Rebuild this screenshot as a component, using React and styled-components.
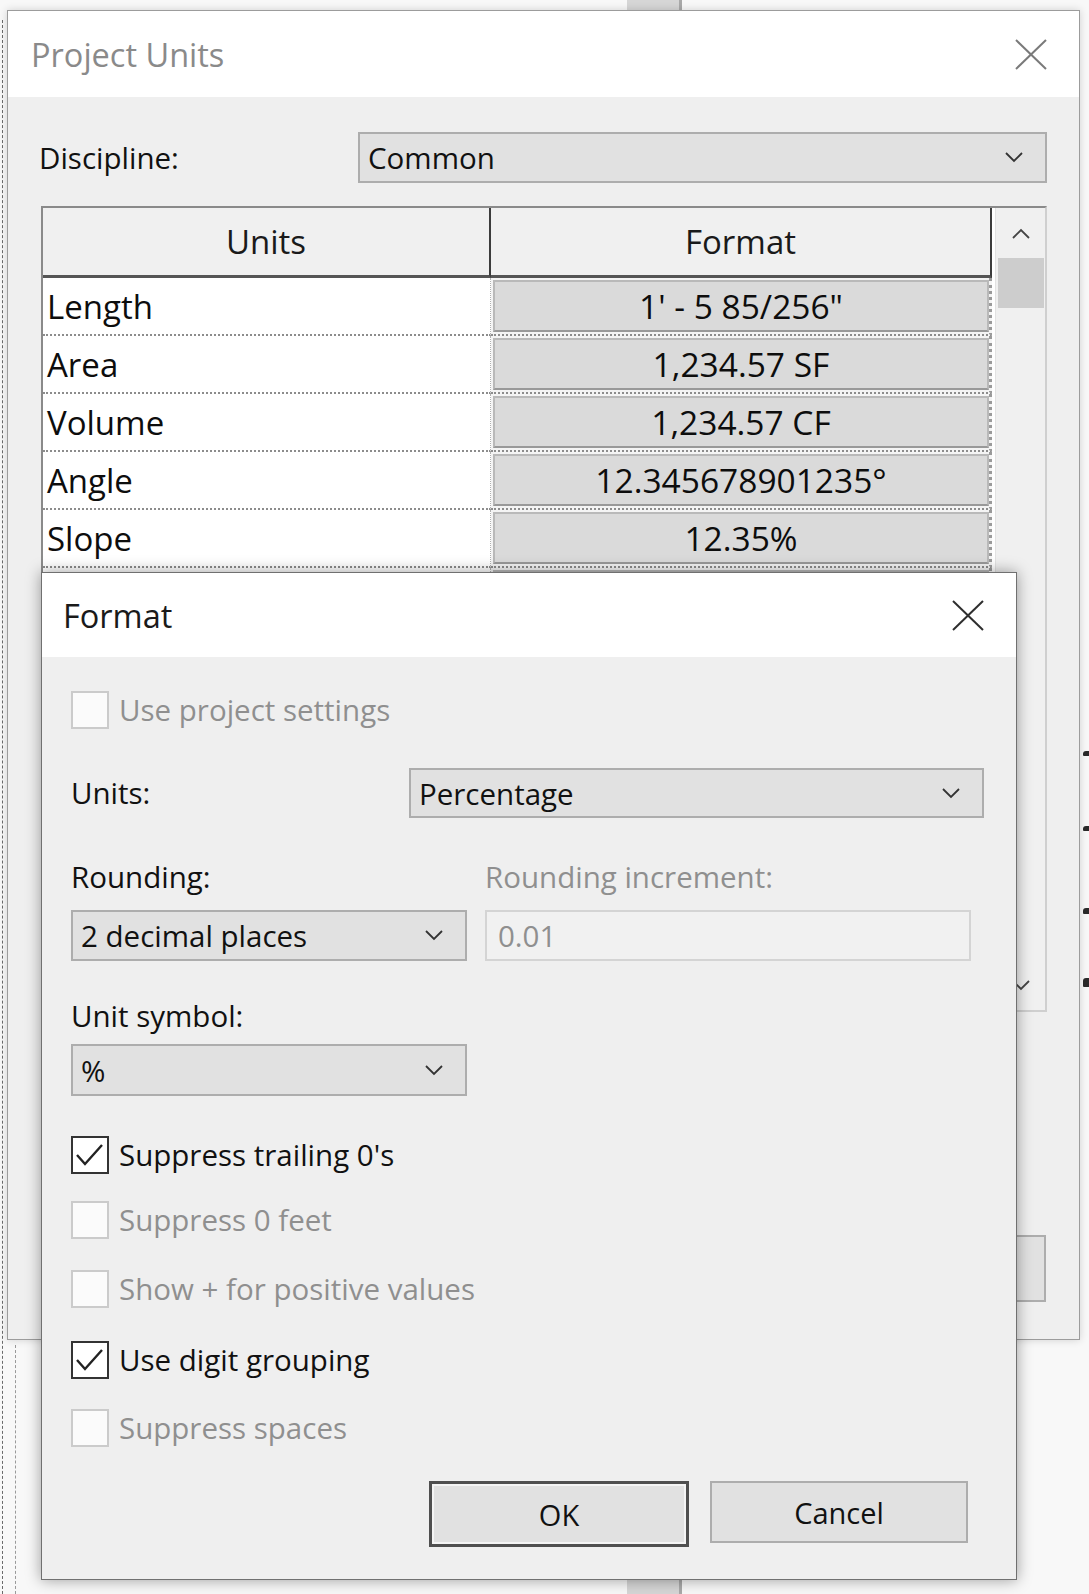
import React from 'react';
import styled, { createGlobalStyle } from 'styled-components';

const GlobalStyle = createGlobalStyle`
  html, body {
    margin: 0;
    padding: 0;
    background: #f7f7f7;
  }
  body {
    font-family: "Open Sans", "Noto Sans", sans-serif;
    color: #111111;
  }
`;

// DESKTOP / BACKGROUND DRAWING
const Desktop = styled.div`
  position: relative;
  width: 1089px;
  height: 1594px;
  overflow: hidden;
  background: #f8f8f8;
`;

const GrayStrip = styled.div`
  position: absolute;
  left: 627px;
  top: 0;
  bottom: 0;
  width: 52px;
  background: #d6d6d6;
  border-right: 3px solid #a9a9a9;
`;

const DashedLine = styled.div`
  position: absolute;
  left: ${p => p.x}px;
  top: ${p => p.top}px;
  bottom: 0;
  border-left: 1px dashed ${p => p.color || '#6a6a6a'};
`;

const Mark = styled.div`
  position: absolute;
  left: 1083px;
  top: ${p => p.y}px;
  width: 7px;
  height: ${p => p.h || 5}px;
  background: #2a2a2a;
  border-radius: 3px 0 0 1px;
`;

// WINDOWS
const Window = styled.div`
  position: absolute;
  left: ${p => p.left}px;
  top: ${p => p.top}px;
  width: ${p => p.w}px;
  height: ${p => p.h}px;
  box-sizing: border-box;
  display: flex;
  flex-direction: column;
  background: #efefef;
  border: 1px solid ${p => (p.active ? '#707070' : '#9c9c9c')};
  box-shadow: ${p => (p.active ? '0 0 14px rgba(0, 0, 0, 0.38)' : '0 0 8px rgba(0, 0, 0, 0.16)')};
`;

const TitleBar = styled.div`
  flex: 0 0 ${p => p.h}px;
  display: flex;
  align-items: center;
  justify-content: space-between;
  padding: 0 ${p => p.padR}px 0 ${p => p.padL}px;
  background: #ffffff;
`;

const Title = styled.span`
  font-size: 32.5px;
  color: ${p => (p.active ? '#1a1a1a' : '#8a8a8a')};
`;

const Body = styled.div`
  flex: 1;
  display: flex;
  flex-direction: column;
  padding: ${p => p.pad};
`;

const Label = styled.div`
  font-size: 29.5px;
  line-height: 36px;
  color: ${p => (p.disabled ? '#8f8f8f' : '#111111')};
`;

const FieldRow = styled.div`
  display: grid;
  grid-template-columns: ${p => p.labelW}px 1fr;
  align-items: center;
  margin-top: ${p => p.mt || 0}px;
`;

const Combo = styled.div`
  height: ${p => p.h || 51}px;
  box-sizing: border-box;
  display: flex;
  align-items: center;
  justify-content: space-between;
  padding: 0 22px 0 8px;
  background: #e1e1e1;
  border: 2px solid #adadad;
  font-size: 29.5px;
  color: #111111;
`;

const TextInput = styled.div`
  height: 51px;
  box-sizing: border-box;
  display: flex;
  align-items: center;
  padding: 0 11px;
  background: #f1f1f1;
  border: 2px solid #d4d4d4;
  font-size: 29.5px;
  color: #8f8f8f;
`;

// PROJECT UNITS TABLE
const Table = styled.div`
  margin: 23px 0 0 2px;
  height: 806px;
  box-sizing: border-box;
  display: flex;
  border: 2px solid #8a8a8a;
  border-bottom-color: #cfcfcf;
  border-right-color: #cfcfcf;
  background: #ffffff;
`;

const Grid = styled.div`
  display: grid;
  grid-template-columns: 448px 501px;
  grid-auto-rows: 58px;
  grid-template-rows: 70px;
  align-content: start;
`;

const HeadCell = styled.div`
  box-sizing: border-box;
  display: flex;
  align-items: center;
  justify-content: center;
  background: #f0f0f0;
  border-right: 2px solid #3c3c3c;
  border-bottom: 3px solid #555555;
  font-size: 33px;
  color: #1a1a1a;
`;

const NameCell = styled.div`
  box-sizing: border-box;
  display: flex;
  align-items: center;
  padding-left: 4px;
  background: #ffffff;
  border-bottom: 2px dotted #8c8c8c;
  border-right: 1px dotted #b0b0b0;
  font-size: 33px;
  color: #0d0d0d;
`;

const FormatCell = styled.div`
  box-sizing: border-box;
  display: flex;
  padding: 2px 0 2px 2px;
  background: #f4f4f4;
  border-bottom: 2px dotted #8c8c8c;
  border-right: 3px dotted #9a9a9a;
`;

const FormatBox = styled.div`
  flex: 1;
  display: flex;
  align-items: center;
  justify-content: center;
  background: #dadada;
  border: 2px solid #b9b9b9;
  border-bottom-color: #999999;
  font-size: 33.5px;
  color: #0d0d0d;
`;

const Scrollbar = styled.div`
  margin-left: 3px;
  width: 50px;
  display: flex;
  flex-direction: column;
  align-items: center;
  background: #f0f0f0;
  border-left: 1px solid #e2e2e2;
`;

const ScrollArrow = styled.div`
  height: 50px;
  display: flex;
  align-items: center;
  justify-content: center;
  margin-top: ${p => (p.down ? 'auto' : '0')};
`;

const Thumb = styled.div`
  width: 46px;
  height: 50px;
  background: #cdcdcd;
`;

const Footer = styled.div`
  margin-top: auto;
  display: flex;
  justify-content: flex-end;
  gap: 20px;
  padding-bottom: 37px;
  margin-right: 1px;
`;

// FORMAT DIALOG PARTS
const CheckRow = styled.div`
  display: flex;
  align-items: center;
  gap: 10px;
  margin-top: ${p => p.mt}px;
  height: 38px;
`;

const Box = styled.div`
  width: 38px;
  height: 38px;
  box-sizing: border-box;
  display: flex;
  align-items: center;
  justify-content: center;
  background: ${p => (p.disabled ? '#fbfbfb' : '#ffffff')};
  border: 2px solid ${p => (p.disabled ? '#cbcbcb' : '#333333')};
`;

const TwoCol = styled.div`
  display: grid;
  grid-template-columns: 396px 486px;
  column-gap: 18px;
  row-gap: 15px;
  margin-top: 41px;
`;

const Stack = styled.div`
  display: flex;
  flex-direction: column;
  gap: 10px;
  width: 396px;
  margin-top: 37px;
`;

const ButtonRow = styled.div`
  display: flex;
  justify-content: flex-end;
  gap: 21px;
  margin-top: 34px;
  margin-right: 16px;
`;

const Button = styled.div`
  width: ${p => p.w}px;
  height: ${p => p.h || 66}px;
  box-sizing: border-box;
  display: flex;
  align-items: center;
  justify-content: center;
  background: #e1e1e1;
  border: ${p => (p.primary ? '3px solid #4f4f4f' : '2px solid #adadad')};
  box-shadow: ${p => (p.primary ? 'inset 0 0 0 2px #f4f4f4' : 'none')};
  font-size: 29px;
  color: #111111;
`;

// ICONS
const Chevron = ({ up, color = '#333' }) => (
  <svg width="18" height="11" viewBox="0 0 18 11">
    <polyline
      points={up ? '1,10 9,2 17,10' : '1,1 9,9 17,1'}
      fill="none"
      stroke={color}
      strokeWidth="1.8"
    />
  </svg>
);

const CloseIcon = ({ color }) => (
  <svg width="32" height="31" viewBox="0 0 32 31">
    <line x1="1" y1="1" x2="31" y2="30" stroke={color} strokeWidth="2" />
    <line x1="31" y1="1" x2="1" y2="30" stroke={color} strokeWidth="2" />
  </svg>
);

const Tick = () => (
  <svg width="30" height="26" viewBox="0 0 30 26">
    <polyline points="2,13 10,22 27,3" fill="none" stroke="#222" strokeWidth="2.4" />
  </svg>
);

const Check = ({ checked, disabled, label, mt }) => (
  <CheckRow mt={mt}>
    <Box disabled={disabled}>{checked && <Tick />}</Box>
    <Label disabled={disabled}>{label}</Label>
  </CheckRow>
);

// visible rows of the units list, then empty rows hidden behind the Format dialog
const units = [
  ['Length', '1\' - 5 85/256"'],
  ['Area', '1,234.57 SF'],
  ['Volume', '1,234.57 CF'],
  ['Angle', '12.345678901235°'],
  ['Slope', '12.35%'],
  ['', ''],
  ['', ''],
  ['', ''],
];

const App = () => {
  return (
    <Desktop>
      <GlobalStyle />
      <GrayStrip />
      <DashedLine x={2} top={20} />
      <DashedLine x={15} top={1345} color="#9a9a9a" />
      <Mark y={751} />
      <Mark y={826} />
      <Mark y={908} h={6} />
      <Mark y={978} h={9} />

      <Window left={7} top={10} w={1073} h={1330}>
        <TitleBar h={86} padL={23} padR={32}>
          <Title>Project Units</Title>
          <CloseIcon color="#7a7a7a" />
        </TitleBar>
        <Body pad="35px 32px 0 31px">
          <FieldRow labelW={319}>
            <Label>Discipline:</Label>
            <Combo>
              Common
              <Chevron />
            </Combo>
          </FieldRow>

          <Table>
            <Grid>
              <HeadCell>Units</HeadCell>
              <HeadCell>Format</HeadCell>
              {units.map(([name, value], i) => (
                <React.Fragment key={i}>
                  <NameCell>{name}</NameCell>
                  <FormatCell>
                    <FormatBox>{value}</FormatBox>
                  </FormatCell>
                </React.Fragment>
              ))}
            </Grid>
            <Scrollbar>
              <ScrollArrow>
                <Chevron up color="#444" />
              </ScrollArrow>
              <Thumb />
              <ScrollArrow down>
                <Chevron color="#444" />
              </ScrollArrow>
            </Scrollbar>
          </Table>

          <Footer>
            <Button w={200} h={67} />
          </Footer>
        </Body>
      </Window>

      <Window active left={41} top={572} w={976} h={1008}>
        <TitleBar h={84} padL={21} padR={32}>
          <Title active>Format</Title>
          <CloseIcon color="#2e2e2e" />
        </TitleBar>
        <Body pad="0 32px 0 29px">
          <Check disabled label="Use project settings" mt={34} />

          <FieldRow labelW={338} mt={39}>
            <Label>Units:</Label>
            <Combo h={50}>
              Percentage
              <Chevron />
            </Combo>
          </FieldRow>

          <TwoCol>
            <Label>Rounding:</Label>
            <Label disabled>Rounding increment:</Label>
            <Combo>
              2 decimal places
              <Chevron />
            </Combo>
            <TextInput>0.01</TextInput>
          </TwoCol>

          <Stack>
            <Label>Unit symbol:</Label>
            <Combo h={52}>
              %
              <Chevron />
            </Combo>
          </Stack>

          <Check checked label="Suppress trailing 0's" mt={40} />
          <Check disabled label="Suppress 0 feet" mt={27} />
          <Check disabled label="Show + for positive values" mt={31} />
          <Check checked label="Use digit grouping" mt={33} />
          <Check disabled label="Suppress spaces" mt={30} />

          <ButtonRow>
            <Button primary w={260}>OK</Button>
            <Button w={258} h={62}>Cancel</Button>
          </ButtonRow>
        </Body>
      </Window>
    </Desktop>
  );
};

export default App;
